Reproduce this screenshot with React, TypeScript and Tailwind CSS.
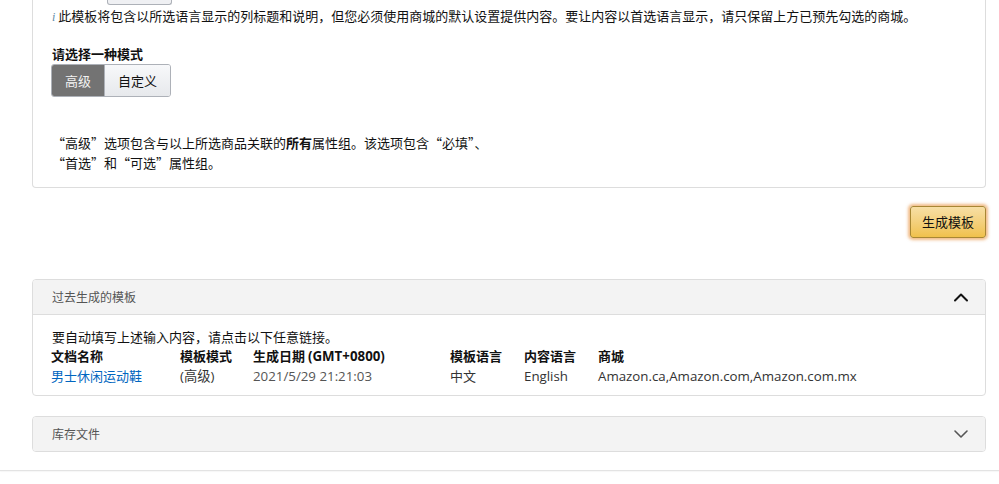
import React from 'react';

const CJK = "font-['Noto_Sans_CJK_SC',sans-serif]";
const LATIN = "font-['Open_Sans','Noto_Sans_CJK_SC',sans-serif]";

type Row = {
  name: string;
  mode: string;
  date: string;
  tplLang: string;
  contentLang: string;
  market: string;
};

const rows: Row[] = [
  {
    name: '男士休闲运动鞋',
    mode: '(高级)',
    date: '2021/5/29 21:21:03',
    tplLang: '中文',
    contentLang: 'English',
    market: 'Amazon.ca,Amazon.com,Amazon.com.mx',
  },
];

function Chevron({ up, className }: { up?: boolean; className?: string }) {
  return (
    <svg width="16" height="10" viewBox="0 0 16 10" className={className} fill="none">
      <polyline
        points={up ? '2,8.5 8,2.5 14,8.5' : '2,2 8,8 14,2'}
        stroke="currentColor"
        strokeWidth={up ? 2 : 1.6}
        strokeLinecap="round"
        strokeLinejoin="round"
      />
    </svg>
  );
}

function PanelHeader({ title, up }: { title: string; up?: boolean }) {
  return (
    <div className="flex h-[34px] items-center justify-between bg-[#f3f3f3] pl-[19px] pr-[16px]">
      <span className={`${CJK} text-[12px] text-[#555]`}>{title}</span>
      <Chevron up={up} className={up ? 'text-[#111]' : 'text-[#555]'} />
    </div>
  );
}

export default function App() {
  const cols = 'grid grid-cols-[129px_73px_197px_74px_74px_1fr] items-baseline';

  return (
    <div className={`min-h-[484px] bg-white text-[13px] text-[#111] ${CJK}`}>
      <div className="ml-[32px] w-[954px]">
        {/* Template options card (top cut off) */}
        <div className="rounded-b-[4px] border-x border-b border-[#ddd] px-[19px] pb-[14px]">
          <div className="ml-[55px] h-[5px] w-[65px] rounded-b-[3px] border-x border-b border-[#adb1b8] bg-[#eff0f3]" />
          <p className="mt-[1px] leading-[20px]">
            <span className="mr-[3px] font-['Liberation_Serif',serif] text-[12px] italic text-[#5f8aa6]">i</span>
            此模板将包含以所选语言显示的列标题和说明，但您必须使用商城的默认设置提供内容。要让内容以首选语言显示，请只保留上方已预先勾选的商城。
          </p>

          <p className="mt-[18px] font-bold leading-[18px]">请选择一种模式</p>
          <div className="-ml-px mt-px flex h-[33px] w-[120px] overflow-hidden rounded-[3px] border border-[#adb1b8]">
            <span className="flex w-[52px] items-center justify-center bg-[#737373] text-[#f2f2f2]">高级</span>
            <span className="flex flex-1 items-center justify-center border-l border-[#adb1b8] bg-gradient-to-b from-[#f7f8fa] to-[#e7e9ec] text-[#111]">
              自定义
            </span>
          </div>

          <p className="mt-[36px] leading-[20px]">
            “高级”选项包含与以上所选商品关联的<span className="font-bold">所有</span>属性组。该选项包含“必填”、
            <br />
            “首选”和“可选”属性组。
          </p>
        </div>

        {/* Generate button */}
        <div className="mt-[18px] flex justify-end">
          <button className="h-[32px] w-[76px] rounded-[3px] border border-[#a88734] bg-gradient-to-b from-[#f7dfa5] to-[#f0c14b] text-[13px] text-[#111] shadow-[0_0_3px_2px_rgba(228,121,17,0.5)]">
            生成模板
          </button>
        </div>

        {/* Previously generated templates */}
        <div className="mt-[41px] overflow-hidden rounded-[4px] border border-[#ddd]">
          <div className="border-b border-[#ddd]">
            <PanelHeader title="过去生成的模板" up />
          </div>
          <div className="px-[19px] pb-[9px] pt-[12px] leading-[19px]">
            <p>要自动填写上述输入内容，请点击以下任意链接。</p>
            <div className={`${cols} -ml-px font-bold`}>
              <span>文档名称</span>
              <span>模板模式</span>
              <span>
                生成日期 <span className={`${LATIN} text-[13.3px]`}>(GMT+0800)</span>
              </span>
              <span>模板语言</span>
              <span>内容语言</span>
              <span>商城</span>
            </div>
            {rows.map((r) => (
              <div key={r.name} className={`${cols} -ml-px`}>
                <a className="cursor-pointer text-[#0066c0]">{r.name}</a>
                <span className={`${LATIN} text-[13.3px] text-[#333]`}>{r.mode}</span>
                <span className={`${LATIN} text-[13.3px] text-[#555]`}>{r.date}</span>
                <span className="text-[#333]">{r.tplLang}</span>
                <span className={`${LATIN} text-[13.3px] text-[#333]`}>{r.contentLang}</span>
                <span className={`${LATIN} text-[13.3px] text-[#333]`}>{r.market}</span>
              </div>
            ))}
          </div>
        </div>

        {/* Inventory files */}
        <div className="mt-[20px] overflow-hidden rounded-[4px] border border-[#ddd]">
          <PanelHeader title="库存文件" />
        </div>
      </div>

      <div className="mt-[18px] h-px w-full bg-[#e3e3e3] shadow-[0_1px_1px_rgba(0,0,0,0.04)]" />
    </div>
  );
}
